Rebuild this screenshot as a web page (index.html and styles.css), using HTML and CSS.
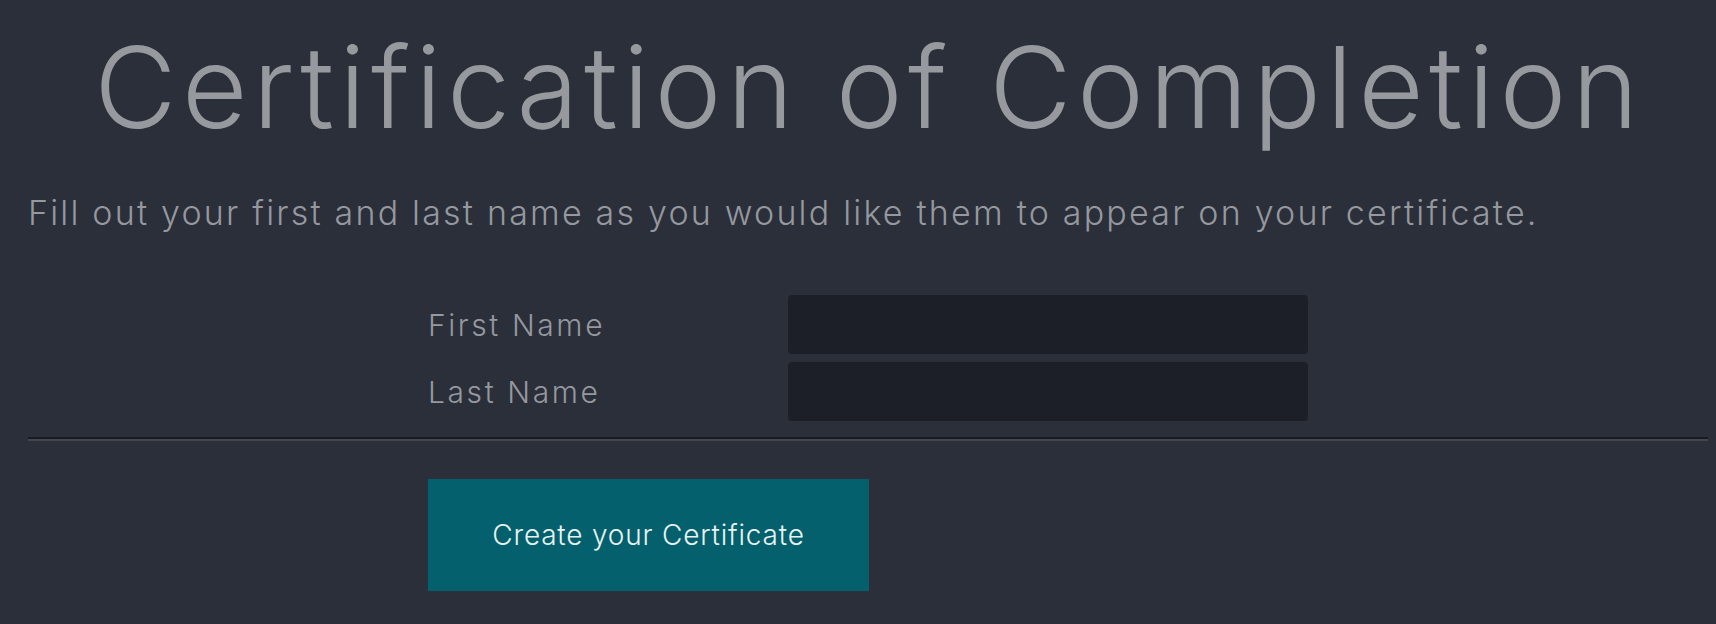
FILE: index.html
```html
<!DOCTYPE html>
<html lang="en">
<head>
<meta charset="utf-8">
<title>Certification of Completion</title>
<link rel="stylesheet" href="styles.css">
</head>
<body>
<main class="page">
  <h1 class="title">Certification of Completion</h1>
  <p class="intro">Fill out your first and last name as you would like them to appear on your certificate.</p>
  <form class="cert-form">
    <div class="fields">
      <div class="field-row">
        <label class="field-label" for="first">First Name</label>
        <input class="field-input" id="first" type="text">
      </div>
      <div class="field-row">
        <label class="field-label" for="last">Last Name</label>
        <input class="field-input" id="last" type="text">
      </div>
    </div>
    <hr class="divider">
    <div class="actions">
      <button class="submit" type="button">Create your Certificate</button>
    </div>
  </form>
</main>
</body>
</html>
```

FILE: styles.css
```css
* { box-sizing: border-box; }
html, body {
  margin: 0;
  padding: 0;
  background: #2a2f3a;
}
body {
  font-family: Inter, "Noto Sans", "Liberation Sans", sans-serif;
  color: #95989e;
  height: 624px;
  overflow: hidden;
}
.page {
  padding: 0 8px 0 28px;
}
.title {
  margin: 0;
  padding-top: 19px;
  padding-left: 2px;
  font-size: 113px;
  font-weight: 300;
  line-height: 136px;
  letter-spacing: 5.3px;
  text-align: center;
  color: #96999e;
}
.intro {
  margin: 38px 0 0 0;
  font-size: 34px;
  font-weight: 300;
  line-height: 40px;
  letter-spacing: 2.2px;
}
.cert-form {
  margin-top: 62px;
}
.fields {
  display: flex;
  flex-direction: column;
  gap: 8px;
  padding-left: 400px;
}
.field-row {
  display: flex;
  align-items: center;
}
.field-label {
  width: 360px;
  font-size: 30px;
  font-weight: 300;
  letter-spacing: 2.6px;
}
.field-input {
  width: 520px;
  height: 59px;
  border: none;
  border-radius: 4px;
  background: #1c1f27;
  outline: none;
}
.divider {
  margin: 16px 0 0 0;
  border: 0;
  border-top: 2px solid #191b21;
  border-bottom: 2px solid #434650;
  height: 0;
}
.actions {
  padding-left: 400px;
  margin-top: 38px;
}
.submit {
  width: 441px;
  height: 112px;
  border: none;
  background: #03606c;
  color: #e8f3f3;
  font-family: inherit;
  font-size: 28px;
  font-weight: 300;
  letter-spacing: 0.8px;
  display: flex;
  align-items: center;
  justify-content: center;
}
```
